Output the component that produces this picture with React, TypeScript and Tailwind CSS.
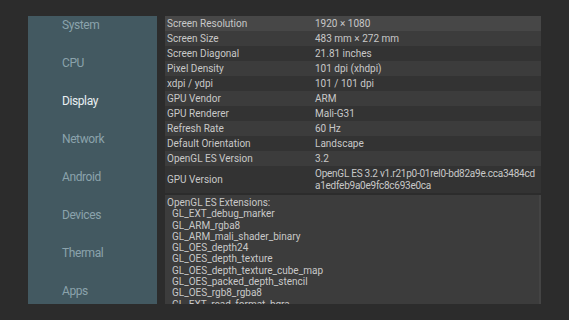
const menu = ['System', 'CPU', 'Display', 'Network', 'Android', 'Devices', 'Thermal', 'Apps']

const rows: [string, string][] = [
  ['Screen Resolution', '1920 × 1080'],
  ['Screen Size', '483 mm × 272 mm'],
  ['Screen Diagonal', '21.81 inches'],
  ['Pixel Density', '101 dpi (xhdpi)'],
  ['xdpi / ydpi', '101 / 101 dpi'],
  ['GPU Vendor', 'ARM'],
  ['GPU Renderer', 'Mali-G31'],
  ['Refresh Rate', '60 Hz'],
  ['Default Orientation', 'Landscape'],
  ['OpenGL ES Version', '3.2'],
]

const extensions = [
  'GL_EXT_debug_marker',
  'GL_ARM_rgba8',
  'GL_ARM_mali_shader_binary',
  'GL_OES_depth24',
  'GL_OES_depth_texture',
  'GL_OES_depth_texture_cube_map',
  'GL_OES_packed_depth_stencil',
  'GL_OES_rgb8_rgba8',
  'GL_EXT_read_format_bgra',
]

function rowBg(i: number) {
  if (i === 0) return 'bg-[#474747]'
  return i % 2 === 1 ? 'bg-[#3c3c3c]' : 'bg-[#333333]'
}

export default function App() {
  return (
    <div
      className="w-[569px] h-[320px] bg-[#2c2c2c] flex pt-4 pl-[28px] overflow-hidden"
      style={{ fontFamily: 'Roboto, "Noto Sans", sans-serif' }}
    >
      {/* Sidebar */}
      <div className="w-[129px] h-[288px] bg-[#435961] overflow-hidden shrink-0">
        <div className="-mt-[10px] flex flex-col">
          {menu.map(m => (
            <div
              key={m}
              className={`h-[38px] flex items-center pl-[34px] text-[12px] tracking-[-0.4px] ${
                m === 'Display' ? 'text-[#e9eff1]' : 'text-[#8ba3ac]'
              }`}
            >
              {m}
            </div>
          ))}
        </div>
      </div>

      {/* Details table */}
      <div className="ml-[8px] w-[376px] h-[288px] flex flex-col overflow-hidden text-[10px] text-[#c8c8c8]">
        {rows.map(([k, v], i) => (
          <div key={k} className={`h-[15px] flex items-center shrink-0 ${rowBg(i)}`}>
            <div className="w-[150px] pl-[2px] shrink-0">{k}</div>
            <div>{v}</div>
          </div>
        ))}
        <div className="h-[27px] flex items-center shrink-0 bg-[#333333]">
          <div className="w-[150px] pl-[2px] shrink-0">GPU Version</div>
          <div className="leading-[12px] whitespace-nowrap tracking-[-0.25px]">
            <div>OpenGL ES 3.2 v1.r21p0-01rel0-bd82a9e.cca3484cd</div>
            <div>a1edfeb9a0e9fc8c693e0ca</div>
          </div>
        </div>
        <div className="mt-[2px] flex-1 bg-[#3c3c3c] flex overflow-hidden">
          <div className="flex-1 pl-[2px] pt-[2px] leading-[11.3px]">
            <div>OpenGL ES Extensions:</div>
            {extensions.map(e => (
              <div key={e} className="pl-[5px]">{e}</div>
            ))}
          </div>
          <div className="w-[2px] bg-[#444444]" />
        </div>
      </div>
    </div>
  )
}
